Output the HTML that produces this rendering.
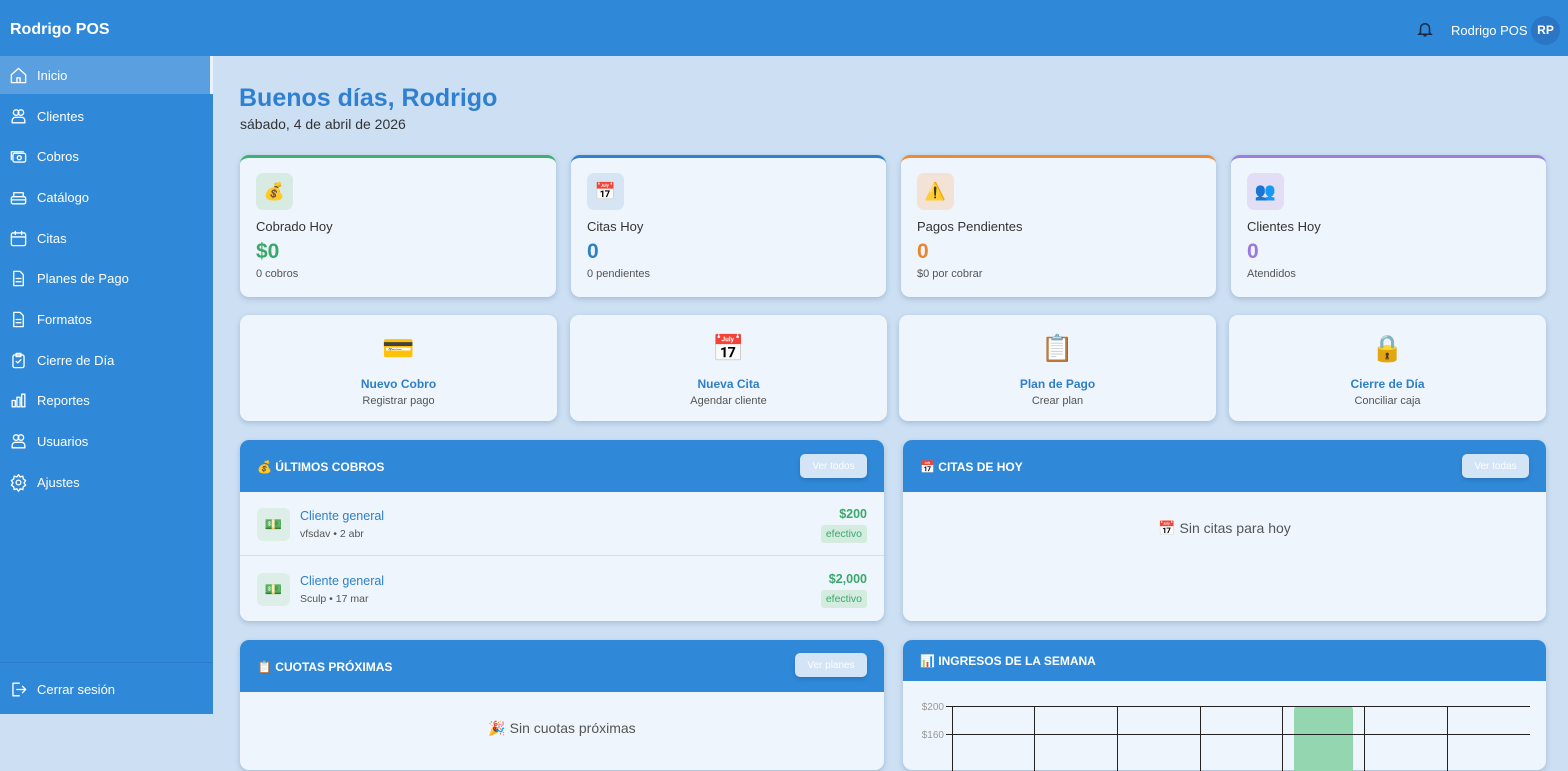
<!DOCTYPE html>
<html><head><meta charset="utf-8"><style>
*{box-sizing:border-box;margin:0;padding:0}
body{width:1568px;height:759px;overflow:hidden;background:#cde0f3;font-family:"Liberation Sans","Noto Sans CJK JP",sans-serif;position:relative}
.hdr{position:absolute;left:0;top:0;width:1568px;height:56px;background:#2f88d8;color:#fff}
.logo{position:absolute;left:10px;top:21px;font-size:16px;font-weight:bold}
.side{position:absolute;left:0;top:56px;width:213px;height:658px;background:#2f88d8}
.nav{position:absolute;left:0;width:213px;height:38px;color:#fff;font-size:13px;display:flex;align-items:center}
.nav svg{position:absolute;left:9px;width:19px;height:19px;fill:none;stroke:#fff;stroke-width:1.7;stroke-linecap:round;stroke-linejoin:round}
.nav span{position:absolute;left:37px}
.act{background:#5a9fe0;border-right:3px solid #e8f2fc}
.card{position:absolute;background:#eef5fc;border-radius:9px;box-shadow:0 2px 6px rgba(40,80,130,.25)}
.stat{top:155px;height:142px;border-top:3px solid}
.ico{position:absolute;left:16px;top:15px;width:37px;height:37px;border-radius:7px;display:flex;align-items:center;justify-content:center;font-size:17px}
.lbl{position:absolute;left:16px;top:61px;font-size:13px;color:#333}
.val{position:absolute;left:16px;top:82px;font-size:21px;font-weight:bold}
.sub{position:absolute;left:16px;top:110px;font-size:11px;color:#555}
.act2{top:315px;height:106px;text-align:center}
.act2 .e{position:absolute;top:18px;width:100%;font-size:26px}
.act2 .t{position:absolute;top:62px;width:100%;font-size:12px;font-weight:bold;color:#2f7fc9}
.act2 .s{position:absolute;top:80px;width:100%;font-size:11px;color:#555}
.ph{position:absolute;left:0;top:0;width:100%;background:#2f88d8;border-radius:9px 9px 0 0;color:#fff;font-size:12px;font-weight:bold}
.ph .h{position:absolute;left:17px}
.btn{position:absolute;right:17px;height:24px;background:#d2e4f5;border-radius:5px;color:#fff;font-size:10px;display:flex;align-items:center;justify-content:center;font-weight:normal;box-shadow:0 2px 4px rgba(0,0,0,.15)}
.row{position:absolute;left:0;width:100%;height:64px}
.row .ic{position:absolute;left:17px;top:16px;width:33px;height:33px;background:#ddeee8;border-radius:6px;text-align:center;line-height:33px;font-size:14px}
.row .n{position:absolute;left:60px;top:17px;font-size:12.5px;color:#2f7fc9}
.row .m{position:absolute;left:60px;top:36px;font-size:10.5px;color:#555}
.row .a{position:absolute;right:17px;top:15px;font-size:12.5px;font-weight:bold;color:#3aa86a}
.row .b{position:absolute;right:17px;top:33px;background:#d3ecdf;color:#3aa86a;font-size:10.5px;padding:3px 5px;border-radius:3px}
.empty{position:absolute;width:100%;text-align:center;font-size:14px;color:#555}
</style></head><body>
<div class="hdr"><div class="logo">Rodrigo POS</div>
<svg style="position:absolute;left:1416px;top:20px" width="18" height="18" viewBox="0 0 24 24" fill="none" stroke="#1a2a44" stroke-width="2"><path d="M6 17V11a6 6 0 0 1 12 0v6l2 2H4z M10 21h4"/></svg>
<div style="position:absolute;left:1451px;top:23px;font-size:13px">Rodrigo POS</div>
<div style="position:absolute;left:1531px;top:16px;width:29px;height:29px;border-radius:50%;background:#2a76c4;font-size:12px;font-weight:bold;text-align:center;line-height:29px">RP</div></div>
<div class="side">
<div class="nav act" style="top:0"><svg viewBox="0 0 24 24"><path d="M3 11l9-8 9 8v10H3z M10 21v-6h4v6"/></svg><span>Inicio</span></div>
<div class="nav" style="top:41px"><svg viewBox="0 0 24 24"><circle cx="9" cy="7" r="3.5"/><circle cx="15" cy="7" r="3.5"/><path d="M4 20v-3a4 4 0 0 1 4-4h8a4 4 0 0 1 4 4v3z"/></svg><span>Clientes</span></div>
<div class="nav" style="top:81px"><svg viewBox="0 0 24 24"><rect x="5" y="8" width="16" height="11" rx="2"/><path d="M3 16V6h15"/><circle cx="13" cy="13.5" r="2.5"/></svg><span>Cobros</span></div>
<div class="nav" style="top:122px"><svg viewBox="0 0 24 24"><rect x="3" y="11" width="18" height="9" rx="2"/><path d="M6 11V6h12v5 M3 15h18"/></svg><span>Catálogo</span></div>
<div class="nav" style="top:163px"><svg viewBox="0 0 24 24"><rect x="3" y="5" width="18" height="16" rx="2"/><path d="M8 3v4 M16 3v4 M3 10h18"/></svg><span>Citas</span></div>
<div class="nav" style="top:203px"><svg viewBox="0 0 24 24"><path d="M6 3h8l4 4v14H6z M9 12h6 M9 16h6"/></svg><span>Planes de Pago</span></div>
<div class="nav" style="top:244px"><svg viewBox="0 0 24 24"><path d="M6 3h8l4 4v14H6z M9 12h6 M9 16h6"/></svg><span>Formatos</span></div>
<div class="nav" style="top:285px"><svg viewBox="0 0 24 24"><rect x="5" y="5" width="14" height="16" rx="2"/><path d="M9 3h6v4H9z M9 13l2 2 4-4"/></svg><span>Cierre de Día</span></div>
<div class="nav" style="top:325px"><svg viewBox="0 0 24 24"><path d="M4 20V12h4v8z M10 20V8h4v12z M16 20V4h4v16z"/></svg><span>Reportes</span></div>
<div class="nav" style="top:366px"><svg viewBox="0 0 24 24"><circle cx="9" cy="7" r="3.5"/><circle cx="15" cy="7" r="3.5"/><path d="M4 20v-3a4 4 0 0 1 4-4h8a4 4 0 0 1 4 4v3z"/></svg><span>Usuarios</span></div>
<div class="nav" style="top:407px"><svg viewBox="0 0 24 24"><circle cx="12" cy="12" r="3"/><path d="M12 2l2 3 3.5-1 .5 3.5 3 2-2 3 2 3-3 2-.5 3.5-3.5-1-2 3-2-3-3.5 1-.5-3.5-3-2 2-3-2-3 3-2 .5-3.5 3.5 1z"/></svg><span>Ajustes</span></div>
<div style="position:absolute;left:0;top:606px;width:213px;border-top:1px solid #2a7cc8"></div>
<div class="nav" style="top:614px"><svg viewBox="0 0 24 24"><path d="M13 4H5v16h8 M10 12h11 M17 8l4 4-4 4"/></svg><span>Cerrar sesión</span></div>
</div>
<div style="position:absolute;left:239px;top:84px;font-size:25px;font-weight:bold;color:#2f80d0">Buenos días, Rodrigo</div>
<div style="position:absolute;left:240px;top:116px;font-size:14px;color:#333">sábado, 4 de abril de 2026</div>

<div class="card stat" style="left:240px;width:316px;border-color:#3fb06f"><div class="ico" style="background:#d8ebe2">💰</div><div class="lbl">Cobrado Hoy</div><div class="val" style="color:#3aa86a">$0</div><div class="sub">0 cobros</div></div>
<div class="card stat" style="left:571px;width:315px;border-color:#2f80d0"><div class="ico" style="background:#d6e4f3">📅</div><div class="lbl">Citas Hoy</div><div class="val" style="color:#2f7fc9">0</div><div class="sub">0 pendientes</div></div>
<div class="card stat" style="left:901px;width:315px;border-color:#ec8a36"><div class="ico" style="background:#f3e2d6">⚠️</div><div class="lbl">Pagos Pendientes</div><div class="val" style="color:#e8862f">0</div><div class="sub">$0 por cobrar</div></div>
<div class="card stat" style="left:1231px;width:315px;border-color:#9b7fe0"><div class="ico" style="background:#e2def5">👥</div><div class="lbl">Clientes Hoy</div><div class="val" style="color:#9a78e0">0</div><div class="sub">Atendidos</div></div>

<div class="card act2" style="left:240px;width:317px"><div class="e">💳</div><div class="t">Nuevo Cobro</div><div class="s">Registrar pago</div></div>
<div class="card act2" style="left:570px;width:317px"><div class="e">📅</div><div class="t">Nueva Cita</div><div class="s">Agendar cliente</div></div>
<div class="card act2" style="left:899px;width:317px"><div class="e">📋</div><div class="t">Plan de Pago</div><div class="s">Crear plan</div></div>
<div class="card act2" style="left:1229px;width:317px"><div class="e">🔒</div><div class="t">Cierre de Día</div><div class="s">Conciliar caja</div></div>

<div class="card" style="left:240px;top:440px;width:644px;height:181px">
<div class="ph" style="height:52px"><div class="h" style="top:20px">💰 ÚLTIMOS COBROS</div><div class="btn" style="top:14px;width:67px">Ver todos</div></div>
<div class="row" style="top:52px;border-bottom:1px solid #d5dfe9"><div class="ic">💵</div><div class="n">Cliente general</div><div class="m">vfsdav • 2 abr</div><div class="a">$200</div><div class="b">efectivo</div></div>
<div class="row" style="top:117px"><div class="ic">💵</div><div class="n">Cliente general</div><div class="m">Sculp • 17 mar</div><div class="a">$2,000</div><div class="b">efectivo</div></div>
</div>
<div class="card" style="left:903px;top:440px;width:643px;height:181px">
<div class="ph" style="height:52px"><div class="h" style="top:20px">📅 CITAS DE HOY</div><div class="btn" style="top:14px;width:67px">Ver todas</div></div>
<div class="empty" style="top:80px">📅 Sin citas para hoy</div></div>

<div class="card" style="left:240px;top:640px;width:644px;height:130px">
<div class="ph" style="height:52px"><div class="h" style="top:20px">📋 CUOTAS PRÓXIMAS</div><div class="btn" style="top:13px;width:72px">Ver planes</div></div>
<div class="empty" style="top:80px">🎉 Sin cuotas próximas</div></div>
<div class="card" style="left:903px;top:640px;width:643px;height:130px">
<div class="ph" style="height:41px"><div class="h" style="top:14px">📊 INGRESOS DE LA SEMANA</div></div>
<svg style="position:absolute;left:0;top:41px" width="643" height="90">
<text x="41" y="29" font-size="10" fill="#999" text-anchor="end" font-family="Liberation Sans">$200</text>
<text x="41" y="57" font-size="10" fill="#999" text-anchor="end" font-family="Liberation Sans">$160</text>
<rect x="391" y="25" width="59" height="70" rx="4" fill="#93d6b0"/>
<g stroke="#222" stroke-width="1"><line x1="43" y1="25.5" x2="627" y2="25.5"/><line x1="43" y1="53.5" x2="627" y2="53.5"/>
<line x1="49.5" y1="25" x2="49.5" y2="90"/><line x1="131.5" y1="25" x2="131.5" y2="90"/><line x1="214.5" y1="25" x2="214.5" y2="90"/><line x1="297.5" y1="25" x2="297.5" y2="90"/><line x1="379.5" y1="25" x2="379.5" y2="90"/><line x1="461.5" y1="25" x2="461.5" y2="90"/><line x1="544.5" y1="25" x2="544.5" y2="90"/></g>
</svg></div>
</body></html>
